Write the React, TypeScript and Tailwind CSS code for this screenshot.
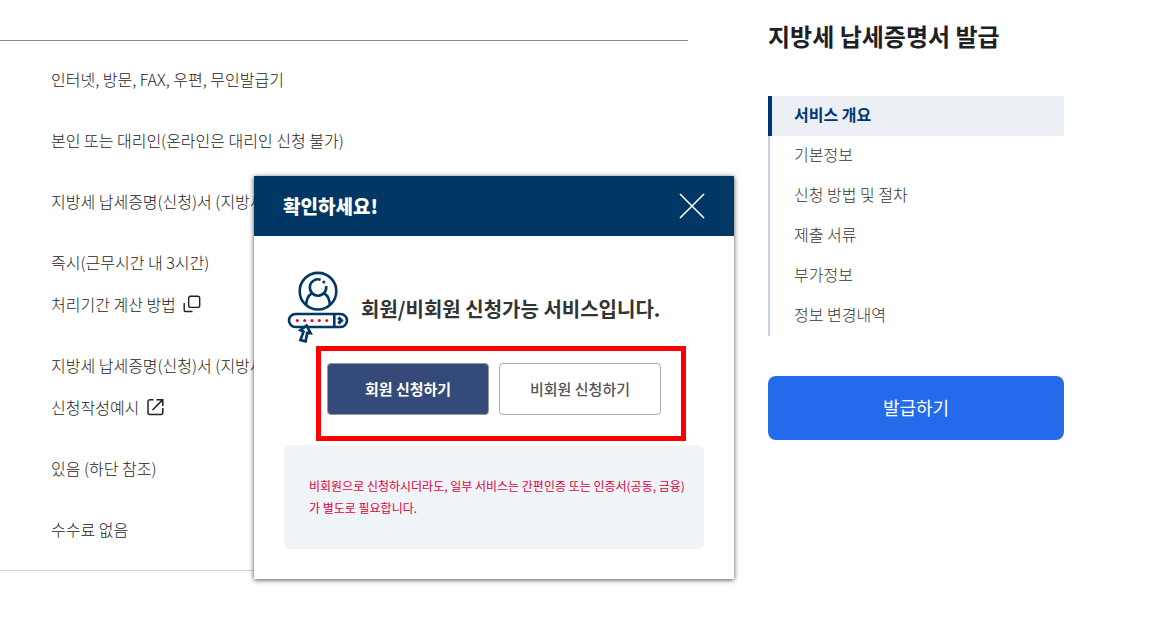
import type { ReactNode } from "react";

const navItems = ["서비스 개요", "기본정보", "신청 방법 및 절차", "제출 서류", "부가정보", "정보 변경내역"];

function WindowIcon() {
  return (
    <svg className="size-5" viewBox="0 0 20 20" fill="none" stroke="#1e2124" strokeWidth="1.4" aria-hidden="true">
      <rect x="6.7" y="2.2" width="11" height="11.2" rx="2" />
      <path d="M2.2 9v7.3a1.2 1.2 0 0 0 1.2 1.2H10.5" />
    </svg>
  );
}

function ExternalIcon() {
  return (
    <svg className="size-5" viewBox="0 0 20 20" fill="none" stroke="#1e2124" strokeWidth="1.5" aria-hidden="true">
      <path d="M8.5 2.7H5a2 2 0 0 0-2 2v10.8a2 2 0 0 0 2 2h10.8a2 2 0 0 0 2-2V11" />
      <path d="M11.5 2.7h6.3V9M17.6 2.9 7.5 13" />
    </svg>
  );
}

function MemberIcon() {
  return (
    <svg className="h-[72px] w-[62px] shrink-0" viewBox="0 0 62 72" fill="none" stroke="#003764" strokeWidth="2.6" aria-hidden="true">
      <circle cx="31" cy="20.2" r="18.3" />
      <path d="M33.6 8.7A8.2 8.2 0 1 0 39.1 15" />
      <circle cx="36.8" cy="10.9" r="1.5" fill="#003764" stroke="none" />
      <path d="M19.2 34.2c0-5.5 1.8-9.4 5.6-11.8M42.8 34.2c0-5.5-1.8-9.4-5.6-11.8" />
      <rect x="2" y="43" width="58" height="13" rx="6.5" />
      <path d="M47.3 43v13" />
      <path d="M51.4 46.5l3 3-3 3" strokeWidth="3.2" />
      <g fill="#e4003a" stroke="none">
        <circle cx="10.3" cy="49.5" r="1.5" />
        <circle cx="17.7" cy="49.5" r="1.5" />
        <circle cx="25" cy="49.5" r="1.5" />
        <circle cx="32.3" cy="49.5" r="1.5" />
        <circle cx="39.7" cy="49.5" r="1.5" />
      </g>
      <path d="M19.6 54.6l-6.2 4.6 3.1 1.4-3.1 8.5 5.2 1.2 1.6-8.4 3.4.3z" fill="#fff" strokeWidth="2.7" />
    </svg>
  );
}

function Row({ children }: { children: ReactNode }) {
  return <li className="flex flex-col items-start gap-[18px]">{children}</li>;
}

export default function App() {
  return (
    <div className="relative min-h-screen overflow-hidden bg-white font-['Noto_Sans_CJK_KR',sans-serif] text-[16px] leading-6 text-[#1e2124]">
      <div className="flex items-start gap-20 pr-[87px]">
        <main className="mt-10 min-w-0 flex-1">
          <ul className="flex flex-col gap-[37px] border-t border-b border-t-[#8a8a8a] border-b-[#d4d4d4] pt-[26px] pb-[29px] pl-[51px] font-light">
            <Row>인터넷, 방문, FAX, 우편, 무인발급기</Row>
            <Row>본인 또는 대리인(온라인은 대리인 신청 불가)</Row>
            <Row>지방세 납세증명(신청)서 (지방세)</Row>
            <Row>
              <span>즉시(근무시간 내 3시간)</span>
              <a href="#period" className="flex items-center gap-1.5">
                처리기간 계산 방법
                <WindowIcon />
              </a>
            </Row>
            <Row>
              <span>지방세 납세증명(신청)서 (지방세)</span>
              <a href="#example" className="flex items-center gap-1.5">
                신청작성예시
                <ExternalIcon />
              </a>
            </Row>
            <Row>있음 (하단 참조)</Row>
            <Row>수수료 없음</Row>
          </ul>
        </main>

        <aside className="flex w-[296px] shrink-0 flex-col pt-5">
          <h1 className="text-2xl font-bold">지방세 납세증명서 발급</h1>
          <nav className="mt-11">
            <ul>
              {navItems.map((item, i) => (
                <li key={item}>
                  <a
                    href={`#section-${i}`}
                    className={
                      i === 0
                        ? "flex h-10 items-center border-l-4 border-[#003675] bg-[#eceff4] pb-1 pl-[22px] font-bold text-[#003675]"
                        : "flex h-10 items-center border-l-2 border-[#c6d3e3] pb-1 pl-6 font-light text-[#333]"
                    }
                  >
                    {item}
                  </a>
                </li>
              ))}
            </ul>
          </nav>
          <button type="button" className="mt-10 h-16 rounded-lg bg-[#256aeb] pb-0.5 text-lg text-white">
            발급하기
          </button>
        </aside>
      </div>

      <div
        role="dialog"
        aria-labelledby="dialog-title"
        className="absolute top-44 left-[254px] w-[480px] bg-white pb-[30px] shadow-[0_1px_5px_rgba(0,0,0,0.7)]"
      >
        <header className="flex h-[60px] items-center justify-between bg-[#003764] px-[29px] text-white">
          <h2 id="dialog-title" className="text-[19px] font-black">확인하세요!</h2>
          <button type="button" aria-label="닫기">
            <svg className="size-[26px]" viewBox="0 0 26 26" stroke="currentColor" strokeWidth="1.6" aria-hidden="true">
              <path d="M1 1l24 24M25 1L1 25" />
            </svg>
          </button>
        </header>
        <div className="flex items-center gap-3 pt-[35px] pl-[33px]">
          <MemberIcon />
          <p className="pt-1 text-xl font-bold text-[#333]">회원/비회원 신청가능 서비스입니다.</p>
        </div>
        <div className="mt-[3px] ml-[62px] flex h-[95px] w-[370px] items-start gap-2.5 border-[5px] border-[#ff0000] pt-3 pl-1.5">
          <button type="button" className="h-[52px] w-[162px] rounded-[4px] border border-[#999] bg-[#344b79] text-[15px] font-bold text-white">
            회원 신청하기
          </button>
          <button type="button" className="h-[52px] w-[162px] rounded-[4px] border border-[#aaa] bg-white text-[15px] font-medium text-[#555]">
            비회원 신청하기
          </button>
        </div>
        <p className="mx-[30px] mt-1 rounded-md bg-[#eff4f9] py-[30px] pl-[25px] text-xs leading-[22px] text-[#e4003a]">
          비회원으로 신청하시더라도, 일부 서비스는 간편인증 또는 인증서(공동, 금융)
          <br />가 별도로 필요합니다.
        </p>
      </div>
    </div>
  );
}
